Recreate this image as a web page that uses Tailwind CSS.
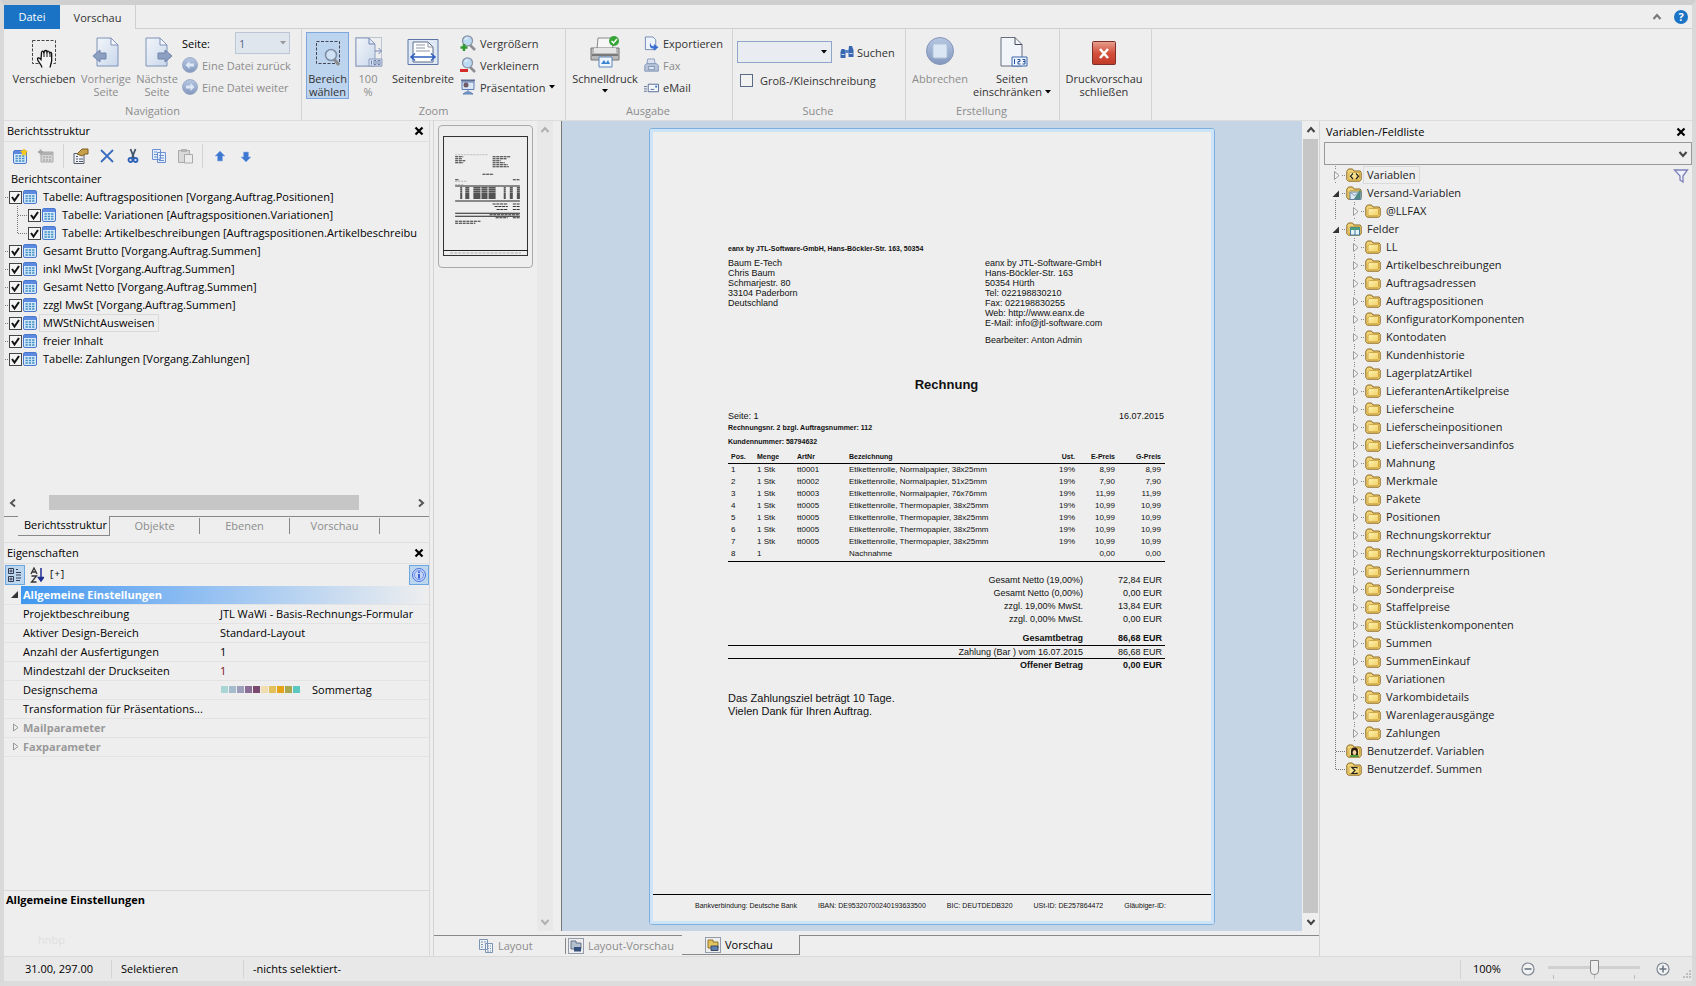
<!DOCTYPE html>
<html lang="de">
<head>
<meta charset="utf-8">
<title>Druckvorschau</title>
<script src="https://cdn.jsdelivr.net/npm/@tailwindcss/browser@4"></script>
</head>
<body class="bg-[#eeeeee]">
<svg class="absolute size-0" aria-hidden="true">
  <defs>
    <linearGradient id="g-blue" x1="0" y1="0" x2="0" y2="1"><stop offset="0" stop-color="#b7c8e2"/><stop offset="1" stop-color="#8498bf"/></linearGradient>
    <linearGradient id="g-page" x1="0" y1="0" x2="1" y2="1"><stop offset="0" stop-color="#f2f5f9"/><stop offset="1" stop-color="#c9d8ec"/></linearGradient>
    <linearGradient id="g-red" x1="0" y1="0" x2="0" y2="1"><stop offset="0" stop-color="#e8a090"/><stop offset=".5" stop-color="#d4503c"/><stop offset="1" stop-color="#c03a28"/></linearGradient>
    <linearGradient id="g-fold" x1="0" y1="0" x2="1" y2="1"><stop offset="0" stop-color="#fdf3b4"/><stop offset="1" stop-color="#f2cf62"/></linearGradient>
  </defs>
  <symbol id="i-check" viewBox="0 0 13 13"><path d="M3 6l2.500 3.500L10 3" fill="none" stroke="#111" stroke-width="2"/></symbol>
  <symbol id="i-table" viewBox="0 0 14 14"><rect x=".5" y=".5" width="13" height="13" rx="1.500" fill="#d6e8fb" stroke="#4a78cc"/><path d="M1 1h12v3H1z" fill="#5b8ae0"/><path d="M2.500 6h9M2.500 8.500h9M2.500 11h9" stroke="#3f8ec2" stroke-width="1.500" stroke-dasharray="2.300 1"/></symbol>
  <symbol id="i-folder" viewBox="0 0 16 14"><path d="M.8 11.500V3.200L2.500 1h4l1.500 2h6.200l1 1.500v7l-1.500 1.700H2.300z" fill="#f0d278" stroke="#8d6a1f" stroke-width="1"/><path d="M3 11.800V5.600L4.500 4.500h9v6.300l-1 1z" fill="url(#g-fold)" stroke="#c99c36" stroke-width=".8"/></symbol>
  <symbol id="i-folder-var" viewBox="0 0 16 14"><use href="#i-folder"/><path d="M7 5.500L4.500 8.200 7 11M10 5.500l2.500 2.700L10 11" fill="none" stroke="#222" stroke-width="1.200"/></symbol>
  <symbol id="i-folder-mail" viewBox="0 0 16 14"><use href="#i-folder"/><path d="M4 6h11v7.500H4z" fill="#dfe9f2" stroke="#5f7f9c"/><path d="M8 13l6.500-10v10z" fill="#4c8a86"/><path d="M4.500 6.500l4 3 3-2" fill="none" stroke="#7f98ad"/></symbol>
  <symbol id="i-folder-field" viewBox="0 0 16 14"><use href="#i-folder"/><path d="M4.500 5.500h9v7.500h-9z" fill="#e6f2f8" stroke="#3f7ea0"/><path d="M4.500 5.500h9v2.500h-9z" fill="#4aa07a"/><path d="M9 8v5" stroke="#3f7ea0"/></symbol>
  <symbol id="i-folder-user" viewBox="0 0 16 14"><use href="#i-folder"/><path d="M4 13c0-2 2-3 4.500-3s4.500 1 4.500 3z" fill="#4a9a3c"/><path d="M5 11V7a3.500 3.500 0 0 1 7 0v4z" fill="#2b1a10"/><ellipse cx="8.500" cy="8.500" rx="1.900" ry="2.500" fill="#f0cfa0"/></symbol>
  <symbol id="i-folder-sum" viewBox="0 0 16 14"><use href="#i-folder"/><path d="M11 6.500V5.500H6l3 3-3 3h5v-1" fill="none" stroke="#222" stroke-width="1.200"/></symbol>
  <symbol id="i-closed" viewBox="0 0 18 18"><path d="M6.500 5.500v8l4.500-4z" fill="#f4f4f4" stroke="#999"/><path d="M14 9.500h4M7.500 0v3M7.500 16v2" stroke="#888" stroke-dasharray="1 1"/></symbol>
  <symbol id="i-open" viewBox="0 0 18 18"><path d="M11 6.500v6.500H4.500z" fill="#333"/><path d="M14 9.500h4M7.500 16v2" stroke="#888" stroke-dasharray="1 1"/></symbol>
  <symbol id="i-vline" viewBox="0 0 18 18"><path d="M7.500 0v18" stroke="#777" stroke-dasharray="1 1"/></symbol>
  <symbol id="i-tee" viewBox="0 0 18 18"><path d="M7.500 0v18M8 9.500h10" stroke="#777" stroke-dasharray="1 1"/></symbol>
  <symbol id="i-elbow" viewBox="0 0 18 18"><path d="M7.500 0v10M8 9.500h10" stroke="#777" stroke-dasharray="1 1"/></symbol>
  <symbol id="i-dash" viewBox="0 0 5 18"><path d="M1 9.500h4" stroke="#777" stroke-dasharray="1 1"/></symbol>
  <symbol id="i-x" viewBox="0 0 10 10"><path d="M1.500 1.500l7 7M8.500 1.500l-7 7" stroke="#000" stroke-width="2.200"/></symbol>
  <symbol id="i-up" viewBox="0 0 10 10"><path d="M1.500 7L5 3l3.500 4" fill="none" stroke="currentColor" stroke-width="2"/></symbol>
  <symbol id="i-down" viewBox="0 0 10 10"><path d="M1.500 3L5 7l3.500-4" fill="none" stroke="currentColor" stroke-width="2"/></symbol>
  <symbol id="i-left" viewBox="0 0 10 10"><path d="M7 1.500L3 5l4 3.500" fill="none" stroke="currentColor" stroke-width="2"/></symbol>
  <symbol id="i-right" viewBox="0 0 10 10"><path d="M3 1.500L7 5 3 8.500" fill="none" stroke="currentColor" stroke-width="2"/></symbol>
  <symbol id="i-caret" viewBox="0 0 6 4"><path d="M0 0h6L3 3.500z" fill="currentColor"/></symbol>
  <symbol id="i-lens" viewBox="0 0 16 16"><path d="M10 10l5 5" stroke="#8d8d96" stroke-width="2.600"/><circle cx="7.500" cy="5.800" r="5" fill="#bcdaf2" stroke="#8a95a8" stroke-width="1.300"/><path d="M5 5a3 3 0 0 1 3-2" stroke="#fff" fill="none"/></symbol>
  <symbol id="i-round" viewBox="0 0 16 16"><circle cx="8" cy="8" r="7.500" fill="url(#g-blue)" stroke="#92a2c0" stroke-width=".8"/></symbol>
  <symbol id="i-page" viewBox="0 0 24 30"><path d="M1 1h14l7 7v21H1z" fill="url(#g-page)" stroke="#7d93b8"/><path d="M15 1v7h7z" fill="#f6f8fb" stroke="#7d93b8"/></symbol>
</svg>

<div class="flex h-screen min-h-[720px] min-w-[1280px] flex-col border-x-4 border-t-[5px] border-b-[5px] border-x-[#d9d9d9] border-t-[#cfcfcf] border-b-[#dcdcdc] bg-[#eeeeee] font-['Open_Sans',sans-serif] text-[11px] leading-[18px] text-black">

  <!-- Registerleiste -->
  <nav class="flex h-6 shrink-0" aria-label="Register">
    <button class="w-14 bg-[#1a73c4] text-white">Datei</button>
    <button class="w-[76px] border-r border-[#cfcfcf] pt-[2px] text-[#333]">Vorschau</button>
    <div class="flex flex-1 items-center justify-end gap-3 border-b border-[#cfcfcf] pr-1">
      <button aria-label="Menüband minimieren" class="text-[#777]"><svg class="size-[10px]"><use href="#i-up"/></svg></button>
      <button aria-label="Hilfe" class="size-[14px] rounded-full bg-[#1a73c4] text-[11px] leading-[14px] font-bold text-white">?</button>
    </div>
  </nav>

  <!-- Menüband -->
  <header class="flex h-[92px] shrink-0 border-b border-[#dcdcdc] text-[#333]">
    <section class="flex w-[298px] flex-col border-r border-[#d4d4d4]">
      <div class="flex h-[74px] pt-[3px] pl-2 leading-[13px]">
        <button class="mr-[2px] flex w-16 flex-col items-center gap-1 pt-1">
          <svg class="size-8" viewBox="0 0 32 32"><rect x="4.500" y="4.500" width="23" height="23" fill="none" stroke="#444" stroke-dasharray="3 1.500"/><path d="M14 31.500c-1-4-4.500-6-4.500-8.500 0-1.800 2-1.500 3.500.5l.5-7c.3-2 2-1.800 2.300 0l.6-1c.6-1.600 2.400-1.200 2.600.4.800-1.200 2.300-.8 2.500.8.900-.8 2-.3 2.200 1 .4 4 .5 8-1.700 13.800" fill="#f4f4f4" stroke="#111" stroke-width="1.300"/><path d="M16 16v5M19 16v5M22 17v4" stroke="#111"/></svg>
          Verschieben</button>
        <button disabled class="flex w-14 flex-col items-center gap-1 pt-1 text-[#8c8c8c]">
          <svg class="size-8" viewBox="0 0 32 32"><use href="#i-page" x="6" y="1" width="24" height="30"/><path d="M3 20l7-6v3h6v6h-6v3z" fill="#8ea0c2" stroke="#6f83ab"/></svg>
          Vorherige<br>Seite</button>
        <button disabled class="flex w-[46px] flex-col items-center gap-1 pt-1 text-[#8c8c8c]">
          <svg class="size-8" viewBox="0 0 32 32"><use href="#i-page" x="4" y="1" width="24" height="30"/><path d="M31 20l-7-6v3h-7v6h7v3z" fill="#8ea0c2" stroke="#6f83ab"/></svg>
          Nächste<br>Seite</button>
        <div class="flex flex-col pl-[2px] text-[#8c8c8c]">
          <div class="flex h-[22px] items-center gap-[25px] text-black">
            <label for="seite">Seite:</label>
            <span class="relative">
              <select id="seite" disabled class="h-[22px] w-[55px] appearance-none border border-[#bcc6d4] bg-[#dfe6ee] pl-[3px] text-[#5b6b85]"><option>1</option></select>
              <svg class="absolute top-[9px] right-1 h-1 w-[6px] text-[#999]"><use href="#i-caret"/></svg>
            </span>
          </div>
          <button disabled class="flex h-[22px] items-center gap-1"><svg class="size-4" viewBox="0 0 16 16"><use href="#i-round"/><path d="M3.500 8l4-4v2.500H12v3H7.500V12z" fill="#dde8f6"/></svg>Eine Datei zurück</button>
          <button disabled class="flex h-[22px] items-center gap-1"><svg class="size-4" viewBox="0 0 16 16"><use href="#i-round"/><path d="M12.500 8l-4-4v2.500H4v3h4.500V12z" fill="#dde8f6"/></svg>Eine Datei weiter</button>
        </div>
      </div>
      <h2 class="text-center leading-4 text-[#8c8c8c]">Navigation</h2>
    </section>

    <section class="flex w-[264px] flex-col border-r border-[#d4d4d4]">
      <div class="flex h-[74px] pt-[3px] pl-1 leading-[13px]">
        <button aria-pressed="true" class="flex h-[67px] w-[43px] flex-col items-center gap-1 border border-[#7da7dc] bg-[#bdd4ef] pt-[3px]">
          <svg class="size-8" viewBox="0 0 32 32"><rect x="4.500" y="5.500" width="23" height="22" fill="none" stroke="#445" stroke-dasharray="3 1.500"/><path d="M22 23l5 6" stroke="#8a8a8a" stroke-width="3"/><circle cx="19" cy="19" r="5.500" fill="#cfe2f5" stroke="#7f8ea5" stroke-width="1.600"/></svg>
          Bereich<br>wählen</button>
        <button disabled class="flex w-[38px] flex-col items-center gap-1 pt-1 text-[#8c8c8c]">
          <svg class="size-8" viewBox="0 0 32 32"><rect x="3.500" y="1.500" width="26" height="29" fill="none" stroke="#8d9dbd" stroke-dasharray="1 1"/><path d="M4 2h13l6 6v22H4z" fill="url(#g-page)" stroke="#8d9dbd"/><path d="M17 2v6h6M23 15h6M26.500 12l3 3-3 3" fill="none" stroke="#7388b2"/><path d="M17 23h13v7H17z" fill="#d6e0ef" stroke="#8d9dbd"/><path d="M19.500 24.500v4M22 24.500h2v4h-2zM26 24.500h2v4h-2z" fill="none" stroke="#6d82ad"/></svg>
          100<br>%</button>
        <button class="flex w-[72px] flex-col items-center gap-1 pt-1">
          <svg class="size-8" viewBox="0 0 32 32"><path d="M1 3.500h30v25H1z" fill="#dfe9f5" stroke="#5d76a6"/><path d="M6 6h15l5 5v15H6z" fill="#fff" stroke="#5d6b85"/><path d="M21 6v5h5M9 9h9M9 12h9M9 15h14" fill="none" stroke="#8b94a4"/><path d="M4 21h24M8 17.500L4 21l4 3.500M24 17.500l4 3.500-4 3.500" fill="none" stroke="#2f5fc0" stroke-width="1.500"/></svg>
          Seitenbreite</button>
        <div class="flex flex-col pl-px">
          <button class="flex h-[22px] items-center gap-1"><svg class="size-4" viewBox="0 0 16 16"><use href="#i-lens"/><path d="M4 9v7M.5 12.500h7" stroke="#2f9a2f" stroke-width="2.500"/></svg>Vergrößern</button>
          <button class="flex h-[22px] items-center gap-1"><svg class="size-4" viewBox="0 0 16 16"><use href="#i-lens"/><path d="M0 13.500h8" stroke="#d32a2a" stroke-width="3"/></svg>Verkleinern</button>
          <button class="flex h-[22px] items-center gap-1"><svg class="size-4" viewBox="0 0 16 16"><path d="M1 1.500h14" stroke="#5d6f91" stroke-width="2"/><path d="M2 3h12v7.500H2z" fill="#dbe7f4" stroke="#5d7fb4"/><circle cx="6" cy="6" r="2.500" fill="#6f5a66"/><path d="M8 10v3M3 15l3-2h4l3 2z" fill="#7aa4d8" stroke="#5d7fb4"/></svg>Präsentation<svg class="h-1 w-[6px] text-black"><use href="#i-caret"/></svg></button>
        </div>
      </div>
      <h2 class="text-center leading-4 text-[#8c8c8c]">Zoom</h2>
    </section>

    <section class="flex w-[167px] flex-col border-r border-[#d4d4d4]">
      <div class="flex h-[74px] pt-[3px] pl-1 leading-[13px]">
        <button class="flex w-[70px] flex-col items-center gap-1 pt-1">
          <svg class="size-8" viewBox="0 0 32 32"><path d="M9 2h14l1 11H8z" fill="#f6f6f6" stroke="#8a8a8a"/><path d="M2 12h28v12H2z" fill="#b9b9b9" stroke="#777"/><path d="M5 12h22v5H5z" fill="#e4e4e4"/><path d="M3 19h26" stroke="#666" stroke-width="1.500"/><path d="M10 21h13v10H10z" fill="#eef5fc" stroke="#5f86b8"/><path d="M12 28l3-4 2 3 2-3 2 4z" fill="#3f86d0"/><circle cx="25" cy="5" r="5" fill="#37a637"/><path d="M22.500 5l2 2 3.500-4" fill="none" stroke="#fff" stroke-width="1.500"/></svg>
          <span class="flex flex-col items-center gap-1">Schnelldruck<svg class="h-1 w-[6px] text-black"><use href="#i-caret"/></svg></span></button>
        <div class="flex flex-col pl-1">
          <button class="flex h-[22px] items-center gap-1"><svg class="size-[15px]" viewBox="0 0 16 16"><path d="M1.500 1h8l3 3v10.500h-11z" fill="#eef4fb" stroke="#7089b4"/><path d="M7 7c0 3 1 4 3.500 4V8.500L15.500 12 10.500 15.800v-2.300C7 13.500 5 11 7 7z" fill="#3a6ed0"/></svg>Exportieren</button>
          <button disabled class="flex h-[22px] items-center gap-1 text-[#8c8c8c]"><svg class="size-[15px]" viewBox="0 0 16 16"><path d="M4 1h7l1 6H3z" fill="#dbe3ef" stroke="#8d9dbd"/><path d="M.8 8l2-2h10.500l2 2v6H.8z" fill="#b5c2d8" stroke="#8394b6"/><rect x="5" y="9" width="6" height="3.500" fill="#dde5f0" stroke="#8394b6"/></svg>Fax</button>
          <button class="flex h-[22px] items-center gap-1"><svg class="size-[15px]" viewBox="0 0 16 16"><path d="M4.500 4.500h11v8h-11z" fill="#f4f8fc" stroke="#556b94"/><path d="M0 7h3M0 9.500h3M0 12h3M7 10h4" stroke="#556b94"/><path d="M12 6h2v2h-2z" fill="#3a6ed0"/></svg>eMail</button>
        </div>
      </div>
      <h2 class="pr-[2px] text-center leading-4 text-[#8c8c8c]">Ausgabe</h2>
    </section>

    <section class="flex w-[173px] flex-col border-r border-[#d4d4d4]">
      <div class="flex h-[74px] flex-col gap-[9px] pt-3 pl-1 leading-[13px]">
        <div class="flex items-center gap-2">
          <div class="flex h-[22px] w-[95px] items-center border border-[#8fa6c9] bg-[#e9edf1] pr-1">
            <input aria-label="Suchtext" class="min-w-0 flex-1 bg-transparent px-1 outline-none">
            <button aria-label="Suchverlauf" class="text-black"><svg class="block h-1 w-[6px]"><use href="#i-caret"/></svg></button>
          </div>
          <button class="flex items-center gap-[3px]"><svg class="size-[14px]" viewBox="0 0 14 14"><path d="M1.500 4h3l1 3v6H.5V7zM9 1h3l1.500 4v7h-5V5z" fill="#3966b0"/><path d="M5 5h4v3H5z" fill="#5b86c8"/><path d="M1.500 9.500h3M9.500 8.500h3" stroke="#c5d8f0"/></svg>Suchen</button>
        </div>
        <label class="flex items-center gap-[7px] pt-[2px] pl-[3px]"><input type="checkbox" class="size-[13px] appearance-none border border-[#5a6b85] bg-[#f2f2f2]">Groß-/Kleinschreibung</label>
      </div>
      <h2 class="pr-[2px] text-center leading-4 text-[#8c8c8c]">Suche</h2>
    </section>

    <section class="flex w-[154px] flex-col border-r border-[#d4d4d4]">
      <div class="flex h-[74px] pt-[3px] pl-1 leading-[13px]">
        <button disabled class="flex w-[60px] flex-col items-center gap-1 pt-1 text-[#8c8c8c]">
          <svg class="size-8" viewBox="0 0 32 32"><circle cx="16" cy="15" r="13.500" fill="url(#g-blue)" stroke="#8496b8"/><rect x="9" y="8" width="14" height="14" rx="1.500" fill="#dbe6f4" stroke="#b3c3dd"/></svg>
          Abbrechen</button>
        <button class="flex w-[84px] flex-col items-center gap-1 pt-1">
          <svg class="size-8" viewBox="0 0 32 32"><path d="M5 1.500h14l7 7V30H5z" fill="#f1f4f8" stroke="#666f80"/><path d="M19 1.500v7h7" fill="none" stroke="#444c5c"/><path d="M16 21h15v9H16z" fill="#eef4fc" stroke="#3c68b0"/><path d="M18.500 23v5M21.500 23.500h2.500v2h-2v2.500h2.500M26.500 23.500H29v4.500h-2.500M27 25.500h2" fill="none" stroke="#24509c"/></svg>
          <span>Seiten<br><span class="flex items-center gap-[3px]">einschränken<svg class="h-1 w-[6px] text-black"><use href="#i-caret"/></svg></span></span></button>
      </div>
      <h2 class="pr-[2px] text-center leading-4 text-[#8c8c8c]">Erstellung</h2>
    </section>

    <section class="flex w-[92px] flex-col border-r border-[#d4d4d4]">
      <div class="flex h-[74px] justify-center pt-[3px] pr-[3px] leading-[13px]">
        <button class="flex flex-col items-center gap-1 pt-1">
          <svg class="size-8" viewBox="0 0 32 32"><rect x="4.500" y="5.500" width="23" height="23" rx="1" fill="url(#g-red)" stroke="#7c3027"/><path d="M12 13l8 9M20 13l-8 9" stroke="#fff" stroke-width="2.600"/></svg>
          Druckvorschau<br>schließen</button>
      </div>
    </section>
  </header>

  <main class="flex min-h-0 flex-1">
    <!-- Linke Spalte -->
    <aside class="flex w-[426px] shrink-0 flex-col border-r border-[#d9d9d9]">
      <section class="flex min-h-0 flex-[422_1_0px] flex-col">
        <div class="flex h-[21px] shrink-0 items-center justify-between border-b border-[#dedede] pr-[5px] pl-[3px]">
          <h2>Berichtsstruktur</h2>
          <button aria-label="Schließen"><svg class="block size-[10px]"><use href="#i-x"/></svg></button>
        </div>
        <div class="flex h-[27px] shrink-0 items-center gap-[10px] pl-2">
          <button aria-label="Neu"><svg class="block size-4" viewBox="0 0 16 16"><use href="#i-table" x="1" y="2" width="14" height="14"/><path d="M12 0l1.200 2.500L16 3l-2 2 .5 3L12 6.500 9.500 8l.5-3-2-2 2.800-.5z" fill="#f8c81c"/></svg></button>
          <button aria-label="Einfügen" disabled><svg class="block size-4" viewBox="0 0 16 16"><path d="M3 4h12v10H3z" fill="#d5d5d5" stroke="#aaa"/><path d="M3 4h12v3H3z" fill="#b0b0b0"/><path d="M5 9h9M5 12h9" stroke="#999" stroke-dasharray="2 1"/><path d="M0 4h5M2.500 1.500v5" stroke="#a5a5a5" stroke-width="2"/></svg></button>
          <span class="-mx-px h-6 w-px bg-[#d4d4d4]"></span>
          <button aria-label="Eigenschaften"><svg class="block size-4" viewBox="0 0 16 16"><path d="M1 5.500h10v10H1z" fill="#eef1f6" stroke="#555d6c"/><path d="M3 8.500h2M3 11h2M3 13.500h2M6 11h4M6 13.500h4" stroke="#50586a"/><path d="M4 6l5-5h6v5h-3L9 8z" fill="#c9a04a" stroke="#7c5d22"/></svg></button>
          <button aria-label="Löschen"><svg class="block size-4" viewBox="0 0 16 16"><path d="M2 2l12 12M14 2L2 14" stroke="#3a6cc0" stroke-width="1.800"/></svg></button>
          <button aria-label="Ausschneiden"><svg class="block size-4" viewBox="0 0 16 16"><path d="M5.500 1L9 10M10.500 1L7 10" stroke="#44546c" stroke-width="1.800"/><circle cx="5.500" cy="12" r="2" fill="none" stroke="#2e62b8" stroke-width="1.800"/><circle cx="10.500" cy="12" r="2" fill="none" stroke="#2e62b8" stroke-width="1.800"/></svg></button>
          <button aria-label="Kopieren"><svg class="block size-4" viewBox="0 0 16 16"><path d="M1.500 1.500h8v10h-8zM6.500 4.500h8v10h-8z" fill="#e6effa" stroke="#6c90d4"/><path d="M3 4h3M3 6.500h3M3 9h3M8 7.500h5M8 10h5M8 12.500h5" stroke="#6c90d4"/></svg></button>
          <button aria-label="Einsetzen" disabled><svg class="block size-4" viewBox="0 0 16 16"><path d="M1.500 2.500h11v12h-11z" fill="#d9d9d9" stroke="#a9a9a9"/><path d="M4 1h6v3H4z" fill="#b5b5b5"/><path d="M7.500 6.500h8v8.500h-8z" fill="#ececec" stroke="#a9a9a9"/></svg></button>
          <span class="-mx-px h-6 w-px bg-[#d4d4d4]"></span>
          <button aria-label="Nach oben"><svg class="block size-4" viewBox="0 0 16 16"><path d="M8 3l5 5h-2.500v5h-5V8H3z" fill="#3f78d0" stroke="#8fb0e4" stroke-width=".6"/></svg></button>
          <button aria-label="Nach unten"><svg class="block size-4" viewBox="0 0 16 16"><path d="M8 14l5-5h-2.500V4h-5v5H3z" fill="#3f78d0" stroke="#8fb0e4" stroke-width=".6"/></svg></button>
        </div>
        <div class="min-h-0 flex-1 overflow-hidden pt-px whitespace-nowrap">
          <p class="pl-[7px]">Berichtscontainer</p>
          <ul id="struktur"></ul>
        </div>
        <div class="flex h-4 shrink-0 items-center gap-[31px] pr-[3px] pl-1 text-[#555]">
          <svg class="size-[10px] shrink-0"><use href="#i-left"/></svg>
          <span class="h-[15px] w-[310px] bg-[#c6c6c6]"></span>
          <svg class="ml-auto size-[10px] shrink-0"><use href="#i-right"/></svg>
        </div>
        <div class="mt-[5px] mb-[6px] flex h-5 shrink-0 leading-[18px] text-[#8c8c8c]">
          <span class="w-[14px] border-t border-[#888]"></span>
          <button class="w-[92px] border-r border-b border-[#888] pl-1 text-black">Berichtsstruktur</button>
          <button class="w-[90px] border-t border-[#888]"><span class="block border-r border-[#888] leading-4">Objekte</span></button>
          <button class="w-[90px] border-t border-[#888]"><span class="block border-r border-[#888] leading-4">Ebenen</span></button>
          <button class="w-[90px] border-t border-[#888]"><span class="block border-r border-[#888] leading-4">Vorschau</span></button>
          <span class="flex-1 border-t border-[#888]"></span>
        </div>
      </section>

      <section class="flex min-h-0 flex-[414_1_0px] flex-col border-t border-[#dedede]">
        <div class="flex h-[21px] shrink-0 items-center justify-between border-b border-[#dedede] pr-[5px] pl-[3px]">
          <h2>Eigenschaften</h2>
          <button aria-label="Schließen"><svg class="block size-[10px]"><use href="#i-x"/></svg></button>
        </div>
        <div class="flex h-[22px] shrink-0 items-center gap-[5px]">
          <button aria-label="Nach Kategorien" class="ml-px grid size-5 place-items-center border border-[#6ea6e0] bg-[#bdd6f0]"><svg class="size-4" viewBox="0 0 16 16"><path d="M1.500 1.500h5v5h-5zM1.500 9.500h5v5h-5zM4 2.500v3M2.500 4h3M4 10.500v3M2.500 12h3M9 2.500h2M9 5.500h5M9 8h5M9 11h5M9 13.500h4" fill="none" stroke="#333c50"/></svg></button>
          <button aria-label="Alphabetisch"><svg class="block h-4 w-[14px]" viewBox="0 0 14 16"><path d="M1 7l3-6 3 6M2 5h4M1.500 9h5l-5 6h5" fill="none" stroke="#333" stroke-width="1.300"/><path d="M11 1v11M8.500 10.500L11 14l2.500-3.500z" stroke="#1c2d90" stroke-width="1.500" fill="#1c2d90"/></svg></button>
          <button class="font-['Liberation_Mono',monospace] text-[9px]">[+]</button>
          <button aria-label="Information" class="ml-auto grid size-5 place-items-center border border-[#6ea6e0] bg-[#bdd6f0]"><svg class="size-4" viewBox="0 0 16 16"><circle cx="8" cy="8" r="6.500" fill="#c6d6fa" stroke="#4a74e0"/><circle cx="8" cy="8" r="4.500" fill="none" stroke="#6f92ea"/><path d="M8 4.500v1.500M8 7v4.500" stroke="#3a5fd0" stroke-width="2"/></svg></button>
        </div>
        <table class="w-full table-fixed border-collapse">
          <colgroup><col class="w-[17px]"><col class="w-[197px]"><col></colgroup>
          <tbody class="whitespace-nowrap [&_td]:border-b [&_td]:border-[#e3e3e3] [&_td]:p-0 [&_th]:border-b [&_th]:border-[#e3e3e3] [&_th]:p-0 [&_th]:pl-[2px] [&_th]:text-left [&_th]:font-normal">
            <tr><td><svg class="ml-[6px] size-[9px]" viewBox="0 0 9 9"><path d="M8 1v7H1z" fill="#333"/></svg></td><th colspan="2" class="bg-linear-to-r from-[#3f97f0] to-[#eeeeee]"><b class="font-bold text-white">Allgemeine Einstellungen</b></th></tr>
            <tr><td></td><th scope="row">Projektbeschreibung</th><td><span class="block overflow-hidden pl-[2px]">JTL WaWi - Basis-Rechnungs-Formular</span></td></tr>
            <tr><td></td><th scope="row">Aktiver Design-Bereich</th><td><span class="pl-[2px]">Standard-Layout</span></td></tr>
            <tr><td></td><th scope="row">Anzahl der Ausfertigungen</th><td><span class="pl-[2px]">1</span></td></tr>
            <tr><td></td><th scope="row">Mindestzahl der Druckseiten</th><td><span class="pl-[2px] text-[#7c1010]">1</span></td></tr>
            <tr><td></td><th scope="row">Designschema</th><td><span class="flex items-center gap-3 pl-[3px]"><span class="flex gap-px [&_i]:h-[7px] [&_i]:w-[7px]"><i class="bg-[#a9d5d5]"></i><i class="bg-[#a4bccb]"></i><i class="bg-[#9d9fbd]"></i><i class="bg-[#8b6f96]"></i><i class="bg-[#7a4a70]"></i><i class="bg-[#f0deb0]"></i><i class="bg-[#e2c05a]"></i><i class="bg-[#e6a317]"></i><i class="bg-[#a8a850]"></i><i class="bg-[#5cc8c0]"></i></span>Sommertag</span></td></tr>
            <tr><td></td><th scope="row">Transformation für Präsentations...</th><td></td></tr>
            <tr class="text-[#999]"><td><svg class="ml-2 size-[9px]" viewBox="0 0 9 9"><path d="M1.500 1v7L6 4.500z" fill="none" stroke="#999"/></svg></td><th colspan="2"><b class="font-bold">Mailparameter</b></th></tr>
            <tr class="text-[#999]"><td><svg class="ml-2 size-[9px]" viewBox="0 0 9 9"><path d="M1.500 1v7L6 4.500z" fill="none" stroke="#999"/></svg></td><th colspan="2"><b class="font-bold">Faxparameter</b></th></tr>
          </tbody>
        </table>
        <div class="mt-auto h-[66px] shrink-0 border-t border-[#d9d9d9] pl-[2px]"><b class="font-bold">Allgemeine Einstellungen</b>
          <p class="pt-[22px] pl-8 text-[#dedede]">hnbp</p></div>
      </section>
    </aside>

    <!-- Vorschau -->
    <section class="ml-[3px] flex min-w-0 flex-1 flex-col border-x border-[#d4d4d4]">
      <div class="flex min-h-0 flex-1">
        <div class="flex w-[128px] shrink-0 border-r border-[#777]">
          <div class="pt-1 pl-1">
            <button aria-label="Seite 1" class="block h-[143px] w-[95px] rounded border border-[#aaa] px-1 pt-[10px] pb-[11px]">
              <svg class="block h-full w-full" viewBox="0 0 84 119" preserveAspectRatio="none">
                <rect x=".5" y=".5" width="83" height="118" fill="none" stroke="#333"/>
                <path d="M12 18.500h32M12 45h12M12 48h8" stroke="#bbb" stroke-dasharray="2 1"/>
                <path d="M12 20.500h8M12 22.500h7M12 24.500h10M12 26.500h8M49 20.500h18M49 22.500h14M49 24.500h8M49 26.500h12M49 28.500h15M49 30.500h16M39 38h11M12 43.500h4M69 43.500h7" stroke="#333" stroke-width="1" stroke-dasharray="3 .6"/>
                <path d="M12 49.500h64M12 64.500h64M12 76.500h64M12 79.500h64" stroke="#222"/>
                <path d="M17 51.500h59M17 53.500h59M17 55.500h59M17 57.500h59M17 59.500h59M17 61.500h59" stroke="#222" stroke-width="1.300" stroke-dasharray="2 3 4 4 7 1 6 1 7 8 2 4 3 4 3 1"/>
                <path d="M49 67.500h15M69 67.500h7M51 70h13M69 70h7M53 73h11M69 73h7M46 78h30M52 81h12M69 81h7M12 84.500h25M12 86.500h20" stroke="#333" stroke-width="1" stroke-dasharray="3 .7"/>
                <path d="M0 113.500h84" stroke="#222"/><path d="M7 116h70" stroke="#aaa" stroke-dasharray="3 1"/>
              </svg>
            </button>
          </div>
          <div class="ml-1 flex w-4 flex-col items-center justify-between bg-[#e8e8e8] py-1 text-[#b0b0b0]">
            <svg class="size-[10px]"><use href="#i-up"/></svg>
            <svg class="size-[10px]"><use href="#i-down"/></svg>
          </div>
        </div>

        <div class="flex min-w-0 flex-1 justify-center bg-[#c5d5e6] pt-[7px] pb-[6px]">
          <!-- Rechnungsblatt -->
          <article class="flex w-[566px] flex-col rounded-[3px] border border-[#7db0e0] bg-[#eeeeee] font-['Liberation_Sans',Arial,sans-serif] text-[9px] leading-[10px] text-[#111] outline-3 -outline-offset-4 outline-[#cde4f6]">
            <div class="pt-[115px] pr-[49px] pl-[78px]">
              <p class="text-[7px] font-bold">eanx by JTL-Software-GmbH, Hans-Böckler-Str. 163, 50354</p>
              <div class="mt-1 flex justify-between">
                <address class="not-italic">Baum E-Tech<br>Chris Baum<br>Schmarjestr. 80<br>33104 Paderborn<br>Deutschland</address>
                <div class="w-[180px]">
                  <p>eanx by JTL-Software-GmbH<br>Hans-Böckler-Str. 163<br>50354 Hürth<br>Tel: 022198830210<br>Fax: 022198830255<br>Web: http://www.eanx.de<br>E-Mail: info@jtl-software.com</p>
                  <p class="mt-[7px]">Bearbeiter: Anton Admin</p>
                </div>
              </div>
              <h1 class="mt-8 text-center text-[13px] leading-4 font-bold">Rechnung</h1>
              <p class="mt-[18px] flex justify-between pr-px"><span>Seite: 1</span><span>16.07.2015</span></p>
              <p class="mt-[2px] text-[7px] font-bold">Rechnungsnr. 2 bzgl. Auftragsnummer: 112</p>
              <p class="mt-1 text-[7px] font-bold">Kundennummer: 58794632</p>
              <table class="mt-1 w-full table-fixed border-collapse border-b border-black text-left text-[8px] leading-3">
                <colgroup><col class="w-[29px]"><col class="w-10"><col class="w-[52px]"><col><col class="w-8"><col class="w-10"><col class="w-[50px]"></colgroup>
                <thead class="border-b border-black text-[7px]"><tr><th class="pl-[3px]">Pos.</th><th>Menge</th><th>ArtNr</th><th>Bezeichnung</th><th class="text-right">Ust.</th><th class="text-right">E-Preis</th><th class="pr-1 text-right">G-Preis</th></tr></thead>
                <tbody id="positionen"></tbody>
              </table>
              <div class="mt-3 text-right leading-[13px] [&_span]:inline-block [&_span]:w-[82px] [&_span]:pr-[3px]">
                <p>Gesamt Netto (19,00%)<span>72,84 EUR</span></p>
                <p>Gesamt Netto (0,00%)<span>0,00 EUR</span></p>
                <p>zzgl. 19,00% MwSt.<span>13,84 EUR</span></p>
                <p>zzgl. 0,00% MwSt.<span>0,00 EUR</span></p>
                <p class="mt-[6px] font-bold">Gesamtbetrag<span>86,68 EUR</span></p>
                <p class="border-y border-black leading-3">Zahlung (Bar ) vom 16.07.2015<span>86,68 EUR</span></p>
                <p class="font-bold">Offener Betrag<span>0,00 EUR</span></p>
              </div>
              <p class="mt-5 text-[11px] leading-[13px]">Das Zahlungsziel beträgt 10 Tage.<br>Vielen Dank für Ihren Auftrag.</p>
            </div>
            <footer class="mx-[3px] mt-auto flex h-[30px] gap-[21px] border-t border-black pt-[6px] pl-[42px] text-[7px] whitespace-nowrap">
              <span>Bankverbindung: Deutsche Bank</span><span>IBAN: DE95320700240193633500</span><span>BIC: DEUTDEDB320</span><span>USt-ID: DE257864472</span><span>Gläubiger-ID:</span>
            </footer>
          </article>
        </div>
        <div class="flex w-[17px] shrink-0 flex-col items-center text-[#444]">
          <svg class="my-1 size-[10px] shrink-0"><use href="#i-up"/></svg>
          <span class="w-[15px] flex-1 bg-[#c6c6c6]"></span>
          <svg class="my-1 size-[10px] shrink-0"><use href="#i-down"/></svg>
        </div>
      </div>
      <div class="mt-1 mb-px flex h-5 shrink-0 leading-[18px] text-[#8c8c8c]">
        <button class="flex w-[131px] items-center gap-1 border-t border-[#888] pl-11">
          <svg class="size-4" viewBox="0 0 16 16"><path d="M1.500 1.500h8v10h-8zM7.500 5.500h7v9h-7z" fill="#eef2f7" stroke="#7c94b4"/><path d="M3 4h5M3 6.500h3M3 9h3M9 8h4M9 10.500h4M9 13h4" stroke="#7c94b4" stroke-dasharray="2 1"/></svg>Layout</button>
        <button class="w-[117px] border-t border-[#888]"><span class="flex h-4 items-center gap-1 border-l border-[#888] pl-[2px]"><svg class="size-4 shrink-0" viewBox="0 0 16 16"><rect x=".5" y=".5" width="15" height="15" fill="none" stroke="#3a4a6a" stroke-dasharray="1 1"/><path d="M3 3h5v2h5v6H3z" fill="#b5c0cf" stroke="#66758c"/><path d="M6 9h7v4.500H6z" fill="#34507c"/></svg>Layout-Vorschau</span></button>
        <button class="flex w-[118px] items-center gap-1 border-r border-b border-[#888] pl-[23px] text-black"><svg class="size-4" viewBox="0 0 16 16"><rect x=".5" y=".5" width="15" height="15" fill="none" stroke="#3a4a6a" stroke-dasharray="1 1"/><path d="M3 3h5v2h5v6H3z" fill="#e2c35c" stroke="#8d7430"/><path d="M6 9h7v4.500H6z" fill="#5f7fae" stroke="#3a4a6a"/></svg>Vorschau</button>
        <span class="flex-1 border-t border-[#888]"></span>
      </div>
    </section>

    <!-- Variablenliste -->
    <aside class="ml-1 flex w-[368px] shrink-0 flex-col">
      <div class="flex h-[21px] shrink-0 items-center justify-between pr-[6px] pl-[2px]">
        <h2>Variablen-/Feldliste</h2>
        <button aria-label="Schließen"><svg class="block size-[10px]"><use href="#i-x"/></svg></button>
      </div>
      <div class="relative">
        <select aria-label="Feld suchen" class="block h-[23px] w-full appearance-none border border-[#999] bg-[#eeeeee]"><option></option></select>
        <svg class="pointer-events-none absolute top-[7px] right-1 size-[10px] text-[#444]"><use href="#i-down"/></svg>
      </div>
      <div class="flex min-h-0 flex-1 items-start justify-between overflow-hidden pt-px pr-[3px] pl-1 text-[#222]">
        <ul id="felder"></ul>
        <button aria-label="Filter" class="mt-[2px]"><svg class="block size-4" viewBox="0 0 16 16"><path d="M1.500 2h13L10 8v6l-3-2V8z" fill="#eef0fa" stroke="#7c80b8" stroke-width="1.300"/></svg></button>
      </div>
    </aside>
  </main>

  <!-- Statusleiste -->
  <footer class="flex h-[25px] shrink-0 items-center border-t border-[#d9d9d9] bg-[#e8e8e8]">
    <span class="w-[108px] border-r border-[#d4d4d4] pl-[21px]">31.00, 297.00</span>
    <span class="w-[132px] border-r border-[#d4d4d4] pl-[9px]">Selektieren</span>
    <span class="flex-1 pl-[9px]">-nichts selektiert-</span>
    <div class="flex items-center border-l border-[#d4d4d4] pl-3">
      <span class="w-[48px]">100%</span>
      <button aria-label="Verkleinern"><svg class="block size-[14px]" viewBox="0 0 14 14"><circle cx="7" cy="7" r="6" fill="#f2f2f2" stroke="#7d8894" stroke-width="1.200"/><path d="M3.500 7h7" stroke="#6a7683" stroke-width="1.600"/></svg></button>
      <div class="mr-4 ml-[13px] flex w-[92px] flex-col">
        <input type="range" min="0" max="100" value="50" aria-label="Zoom" class="block h-[15px] w-full appearance-none bg-transparent [&::-webkit-slider-runnable-track]:h-[3px] [&::-webkit-slider-runnable-track]:bg-[#d0d0d0] [&::-webkit-slider-thumb]:-mt-[6px] [&::-webkit-slider-thumb]:h-[15px] [&::-webkit-slider-thumb]:w-[9px] [&::-webkit-slider-thumb]:appearance-none [&::-webkit-slider-thumb]:rounded-b-[4px] [&::-webkit-slider-thumb]:border [&::-webkit-slider-thumb]:border-[#8a8a8a] [&::-webkit-slider-thumb]:bg-[#eeeeee]">
        <span class="flex justify-between px-[5px]"><i class="h-1 w-px bg-[#bbb]"></i><i class="h-1 w-px bg-[#bbb]"></i><i class="h-1 w-px bg-[#bbb]"></i></span>
      </div>
      <button aria-label="Vergrößern"><svg class="block size-[14px]" viewBox="0 0 14 14"><circle cx="7" cy="7" r="6" fill="#f2f2f2" stroke="#7d8894" stroke-width="1.200"/><path d="M3.500 7h7M7 3.500v7" stroke="#6a7683" stroke-width="1.600"/></svg></button>
      <svg class="ml-3 size-[10px] self-end" viewBox="0 0 10 10"><path d="M7 1h2v2H7zM4 4h2v2H4zM7 4h2v2H7zM1 7h2v2H1zM4 7h2v2H4zM7 7h2v2H7z" fill="#bdbdbd"/></svg>
    </div>
  </footer>
</div>
<script>
const icon = (id, cls) => `<svg class="${cls}" aria-hidden="true"><use href="#${id}"/></svg>`;

// Berichtsstruktur: [Ebene, Bezeichnung]
const struktur = [
  [0, 'Tabelle: Auftragspositionen [Vorgang.Auftrag.Positionen]'],
  [1, 'Tabelle: Variationen [Auftragspositionen.Variationen]'],
  [2, 'Tabelle: Artikelbeschreibungen [Auftragspositionen.Artikelbeschreibu'],
  [0, 'Gesamt Brutto [Vorgang.Auftrag.Summen]'],
  [0, 'inkl MwSt [Vorgang.Auftrag.Summen]'],
  [0, 'Gesamt Netto [Vorgang.Auftrag.Summen]'],
  [0, 'zzgl MwSt [Vorgang.Auftrag.Summen]'],
  [0, 'MWStNichtAusweisen'],
  [0, 'freier Inhalt'],
  [0, 'Tabelle: Zahlungen [Vorgang.Zahlungen]'],
];
document.getElementById('struktur').innerHTML = struktur.map(([ebene, text]) => {
  const linie = ebene === 0 ? icon('i-dash', 'h-[18px] w-[5px] shrink-0')
    : icon(ebene === 1 ? 'i-tee' : 'i-elbow', 'ml-[6px] h-[18px] w-[18px] shrink-0');
  const rahmen = text === 'MWStNichtAusweisen' ? 'border-[#dadada]' : 'border-transparent';
  return `<li><label class="flex h-[18px] items-center">${linie}
    <span class="grid shrink-0"><input type="checkbox" checked class="peer col-start-1 row-start-1 size-[13px] appearance-none border border-[#444] bg-[#f4f4f4]">
    ${icon('i-check', 'pointer-events-none col-start-1 row-start-1 hidden size-[13px] peer-checked:block')}</span>
    ${icon('i-table', 'ml-px size-[14px] shrink-0')}
    <span class="ml-[2px] border ${rahmen} px-[3px] leading-4">${text}</span></label></li>`;
}).join('');

// Feldliste: Ordner mit Symbol und Unterordnern
const felder = [
  ['i-closed', 'i-folder-var', 'Variablen', []],
  ['i-open', 'i-folder-mail', 'Versand-Variablen', ['@LLFAX']],
  ['i-open', 'i-folder-field', 'Felder', ['LL', 'Artikelbeschreibungen', 'Auftragsadressen', 'Auftragspositionen',
    'KonfiguratorKomponenten', 'Kontodaten', 'Kundenhistorie', 'LagerplatzArtikel', 'LieferantenArtikelpreise',
    'Lieferscheine', 'Lieferscheinpositionen', 'Lieferscheinversandinfos', 'Mahnung', 'Merkmale', 'Pakete',
    'Positionen', 'Rechnungskorrektur', 'Rechnungskorrekturpositionen', 'Seriennummern', 'Sonderpreise',
    'Staffelpreise', 'Stücklistenkomponenten', 'Summen', 'SummenEinkauf', 'Variationen', 'Varkombidetails',
    'Warenlagerausgänge', 'Zahlungen']],
  ['i-tee', 'i-folder-user', 'Benutzerdef. Variablen', []],
  ['i-elbow', 'i-folder-sum', 'Benutzerdef. Summen', []],
];
document.getElementById('felder').innerHTML = felder.map(([knoten, ordner, name, kinder]) => {
  const rahmen = name === 'Variablen' ? 'border-[#dadada]' : 'border-transparent';
  return `<li><div class="flex h-[18px] items-center">${icon(knoten, 'size-[18px]')}${icon(ordner, 'h-[14px] w-4')}
    <span class="ml-px border ${rahmen} px-[3px] leading-4">${name}</span></div>` +
    (kinder.length ? '<ul>' + kinder.map(kind =>
      `<li class="flex h-[18px] items-center">${icon('i-vline', 'mr-px size-[18px]')}${icon('i-closed', 'size-[18px]')}${icon('i-folder', 'h-[14px] w-4')}
      <span class="ml-[5px]">${kind}</span></li>`).join('') + '</ul>' : '') + '</li>';
}).join('');

// Rechnungspositionen
const positionen = [
  ['1', '1 Stk', 'tt0001', 'Etikettenrolle, Normalpapier, 38x25mm', '19%', '8,99'],
  ['2', '1 Stk', 'tt0002', 'Etikettenrolle, Normalpapier, 51x25mm', '19%', '7,90'],
  ['3', '1 Stk', 'tt0003', 'Etikettenrolle, Normalpapier, 76x76mm', '19%', '11,99'],
  ['4', '1 Stk', 'tt0005', 'Etikettenrolle, Thermopapier, 38x25mm', '19%', '10,99'],
  ['5', '1 Stk', 'tt0005', 'Etikettenrolle, Thermopapier, 38x25mm', '19%', '10,99'],
  ['6', '1 Stk', 'tt0005', 'Etikettenrolle, Thermopapier, 38x25mm', '19%', '10,99'],
  ['7', '1 Stk', 'tt0005', 'Etikettenrolle, Thermopapier, 38x25mm', '19%', '10,99'],
  ['8', '1', '', 'Nachnahme', '', '0,00'],
];
document.getElementById('positionen').innerHTML = positionen.map(([pos, menge, nr, text, ust, preis]) =>
  `<tr class="last:[&>td]:pb-px"><td class="pl-[3px]">${pos}</td><td>${menge}</td><td>${nr}</td><td>${text}</td>
   <td class="text-right">${ust}</td><td class="text-right">${preis}</td><td class="pr-1 text-right">${preis}</td></tr>`).join('');
</script>
</body>
</html>
